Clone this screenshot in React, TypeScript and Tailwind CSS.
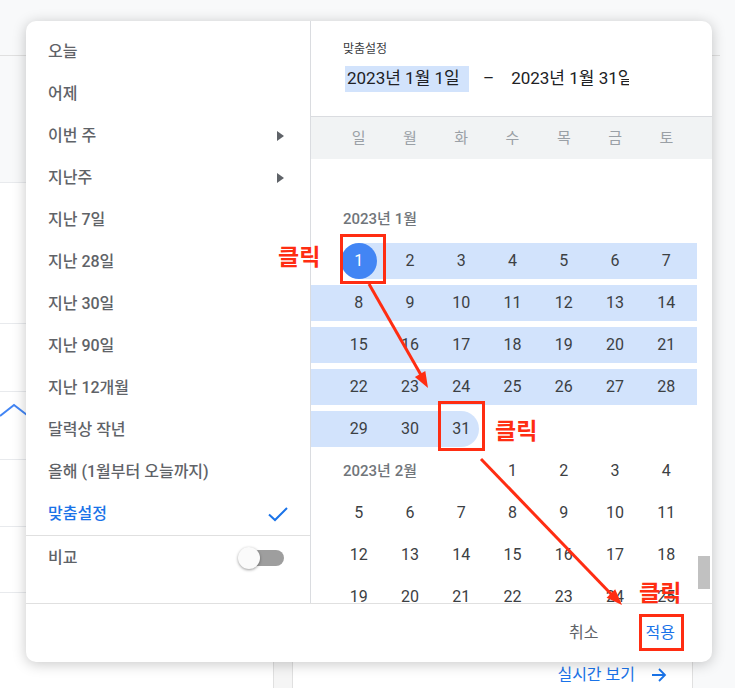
import React from "react"

const menu = [
  "오늘",
  "어제",
  "이번 주",
  "지난주",
  "지난 7일",
  "지난 28일",
  "지난 30일",
  "지난 90일",
  "지난 12개월",
  "달력상 작년",
  "올해 (1월부터 오늘까지)",
]

const weekdays = ["일", "월", "화", "수", "목", "금", "토"]

function Caret() {
  return (
    <svg width="7" height="10" viewBox="0 0 7 10">
      <path d="M0 0 L7 5 L0 10 Z" fill="#5f6368" />
    </svg>
  )
}

function Day({ n, band = false }: { n?: number; band?: boolean }) {
  return (
    <div className={`flex items-center justify-center text-[16px] text-[#3c4043] ${band ? "bg-[#d2e3fc]" : ""}`}>
      {n}
    </div>
  )
}

function Week({ days, band = false }: { days: number[]; band?: boolean }) {
  return (
    <div className="h-[42px] py-[3px]">
      <div
        className={`grid h-[36px] grid-cols-[22px_repeat(7,minmax(0,1fr))_5px] ${band ? "bg-[#d2e3fc]" : ""}`}
      >
        <div />
        {days.map((d) => (
          <Day key={d} n={d} />
        ))}
        <div />
      </div>
    </div>
  )
}

function Annotations() {
  return (
    <>
      <svg className="pointer-events-none absolute left-0 top-0" width="735" height="688">
        <line x1="369" y1="284" x2="421" y2="375" stroke="#ff2d12" strokeWidth="3" />
        <polygon points="428,388 414.9,377.1 425.3,371.1" fill="#ff2d12" />
        <line x1="481" y1="459" x2="612" y2="595" stroke="#ff2d12" strokeWidth="3" />
        <polygon points="622,605 606.6,597.7 615.2,589.3" fill="#ff2d12" />
      </svg>
      <div className="absolute left-[340px] top-[234px] h-[50px] w-[46px] border-[3px] border-[#ff2d12]" />
      <div className="absolute left-[438px] top-[401px] h-[50px] w-[47px] border-[3px] border-[#ff2d12]" />
      <div className="absolute left-[639px] top-[614px] h-[37px] w-[45px] border-[3px] border-[#ff2d12]" />
      <span className="absolute left-[278px] top-[246px] text-[23px] font-bold leading-none text-[#ff2d12]">클릭</span>
      <span className="absolute left-[495px] top-[420px] text-[23px] font-bold leading-none text-[#ff2d12]">클릭</span>
      <span className="absolute left-[639px] top-[582px] text-[23px] font-bold leading-none text-[#ff2d12]">클릭</span>
    </>
  )
}

export default function App() {
  return (
    <div className="relative h-[688px] w-[735px] overflow-hidden bg-[#f8f9fa] font-[Roboto,'Noto_Sans_CJK_KR',sans-serif]">
      {/* page behind the dialog */}
      <div className="flex h-full flex-col">
        <div className="h-[56px] w-[720px] border-b border-[#e0e0e0]" />
        <div className="flex flex-1">
          <div className="flex w-[273px] flex-col bg-white">
            <div className="h-[127px] border-b border-[#e8eaed] bg-[#f8f9fa]" />
            <div className="h-[141px] border-b border-[#e8eaed]" />
            <div className="h-[68px] border-b border-[#e8eaed]" />
            <div className="h-[68px] border-b border-[#e8eaed]">
              <svg width="30" height="30" className="mt-[10px]">
                <polyline points="0,14 14,3 27,13" fill="none" stroke="#4285f4" strokeWidth="2" />
              </svg>
            </div>
            <div className="h-[67px] border-b border-[#e8eaed]" />
            <div className="h-[66px] border-b border-[#e8eaed]" />
          </div>
          <div className="w-[20px] border-x border-[#e0e0e0] bg-[#f5f5f5]" />
          <div className="flex w-[400px] flex-col justify-end border-r border-[#e0e0e0] bg-white">
            <div className="flex items-center justify-end gap-[16px] pb-[1px] pr-[25px] text-[16px] text-[#1a73e8]">
              실시간 보기
              <svg width="16" height="16" viewBox="0 0 16 16">
                <path d="M1 8 H14 M8 2 L14 8 L8 14" fill="none" stroke="#1a73e8" strokeWidth="1.8" />
              </svg>
            </div>
          </div>
        </div>
      </div>

      {/* dialog */}
      <div className="absolute left-[26px] top-[21px] flex h-[641px] w-[686px] flex-col overflow-hidden rounded-[10px] bg-white shadow-[0_2px_14px_rgba(0,0,0,0.22)]">
        <div className="flex h-[582px]">
          {/* presets */}
          <div className="flex w-[285px] flex-col border-r border-[#dadce0]">
            <div className="pt-[10px]">
              {menu.map((m, i) => (
                <div key={m} className="flex h-[42px] items-center justify-between pl-[22px] pr-[26px] text-[16px] font-medium text-[#5f6368]">
                  <span>{m}</span>
                  {i === 2 || i === 3 ? <Caret /> : null}
                </div>
              ))}
              <div className="flex h-[42px] items-center justify-between pl-[22px] pr-[22px] text-[16px] font-medium text-[#1a73e8]">
                <span>맞춤설정</span>
                <svg width="20" height="16" viewBox="0 0 20 16">
                  <path d="M1 8.5 L7 14 L19 2" fill="none" stroke="#1a73e8" strokeWidth="2" />
                </svg>
              </div>
            </div>
            <div className="flex h-[44px] items-center justify-between border-t border-[#e0e0e0] pl-[22px] pr-[26px] text-[16px] font-medium text-[#5f6368]">
              <span>비교</span>
              <div className="flex w-[46px] items-center">
                <div className="z-10 h-[22px] w-[22px] rounded-full bg-[#fafafa] shadow-[0_1px_3px_rgba(0,0,0,0.4)]" />
                <div className="-ml-[12px] h-[16px] w-[36px] rounded-full bg-[#9e9e9e]" />
              </div>
            </div>
          </div>

          {/* calendar */}
          <div className="flex w-[401px] flex-col">
            <div className="h-[95px] pl-[32px] pt-[20px]">
              <div className="text-[12px] leading-[16px] text-[#3c4043]">맞춤설정</div>
              <div className="mt-[9px] flex h-[26px] items-center text-[17px] text-[#202124]">
                <div className="ml-[2px] flex h-[26px] w-[124px] items-center whitespace-nowrap bg-[#d2e3fc] pl-[2px]">2023년 1월 1일</div>
                <span className="ml-[14px]">–</span>
                <div className="ml-[17px] w-[118px] overflow-hidden whitespace-nowrap">2023년 1월 31일</div>
              </div>
            </div>
            <div className="h-[43px] border-t border-[#dadce0] bg-[#f1f3f4]">
              <div className="grid h-full w-[386px] grid-cols-[22px_repeat(7,minmax(0,1fr))_5px]">
                <div />
                {weekdays.map((w) => (
                  <div key={w} className="flex items-center justify-center text-[15px] text-[#9aa0a6]">
                    {w}
                  </div>
                ))}
                <div />
              </div>
            </div>
            <div className="flex min-h-0 flex-1 overflow-hidden">
              <div className="w-[386px] pt-[46px]">
                <div className="flex h-[28px] items-center pl-[32px] text-[15px] font-medium text-[#70757a]">2023년 1월</div>
                <div className="mt-[7px]">
                  <div className="h-[42px] py-[3px]">
                    <div className="grid h-[36px] grid-cols-[22px_repeat(7,minmax(0,1fr))_5px]">
                      <div />
                      <div className="flex items-center justify-center bg-[linear-gradient(to_right,transparent_50%,#d2e3fc_50%)]">
                        <span className="flex h-[36px] w-[36px] items-center justify-center rounded-full bg-[#4285f4] text-[16px] text-white">1</span>
                      </div>
                      {[2, 3, 4, 5, 6, 7].map((d) => (
                        <Day key={d} n={d} band />
                      ))}
                      <div className="bg-[#d2e3fc]" />
                    </div>
                  </div>
                  <Week days={[8, 9, 10, 11, 12, 13, 14]} band />
                  <Week days={[15, 16, 17, 18, 19, 20, 21]} band />
                  <Week days={[22, 23, 24, 25, 26, 27, 28]} band />
                  <div className="h-[42px] py-[3px]">
                    <div className="grid h-[36px] grid-cols-[22px_repeat(7,minmax(0,1fr))_5px]">
                      <div className="bg-[#d2e3fc]" />
                      <Day n={29} band />
                      <Day n={30} band />
                      <div className="flex items-center justify-center bg-[linear-gradient(to_right,#d2e3fc_50%,transparent_50%)]">
                        <span className="flex h-[36px] w-[36px] items-center justify-center rounded-full bg-[#d2e3fc] text-[16px] text-[#3c4043]">31</span>
                      </div>
                    </div>
                  </div>
                  <div className="h-[42px] py-[3px]">
                    <div className="grid h-[36px] grid-cols-[22px_repeat(7,minmax(0,1fr))_5px]">
                      <div className="col-span-4 flex items-center pl-[32px] text-[15px] font-medium text-[#70757a]">2023년 2월</div>
                      {[1, 2, 3, 4].map((d) => (
                        <Day key={d} n={d} />
                      ))}
                    </div>
                  </div>
                  <Week days={[5, 6, 7, 8, 9, 10, 11]} />
                  <Week days={[12, 13, 14, 15, 16, 17, 18]} />
                  <Week days={[19, 20, 21, 22, 23, 24, 25]} />
                </div>
              </div>
              <div className="w-[15px]">
                <div className="ml-[1px] mt-[397px] h-[33px] w-[12px] bg-[#c1c1c1]" />
              </div>
            </div>
          </div>
        </div>

        <div className="flex h-[59px] items-center justify-end gap-[47px] border-t border-[#e0e0e0] pr-[37px] text-[16px]">
          <button className="text-[#5f6368]">취소</button>
          <button className="text-[#1a73e8]">적용</button>
        </div>
      </div>

      <Annotations />
    </div>
  )
}
